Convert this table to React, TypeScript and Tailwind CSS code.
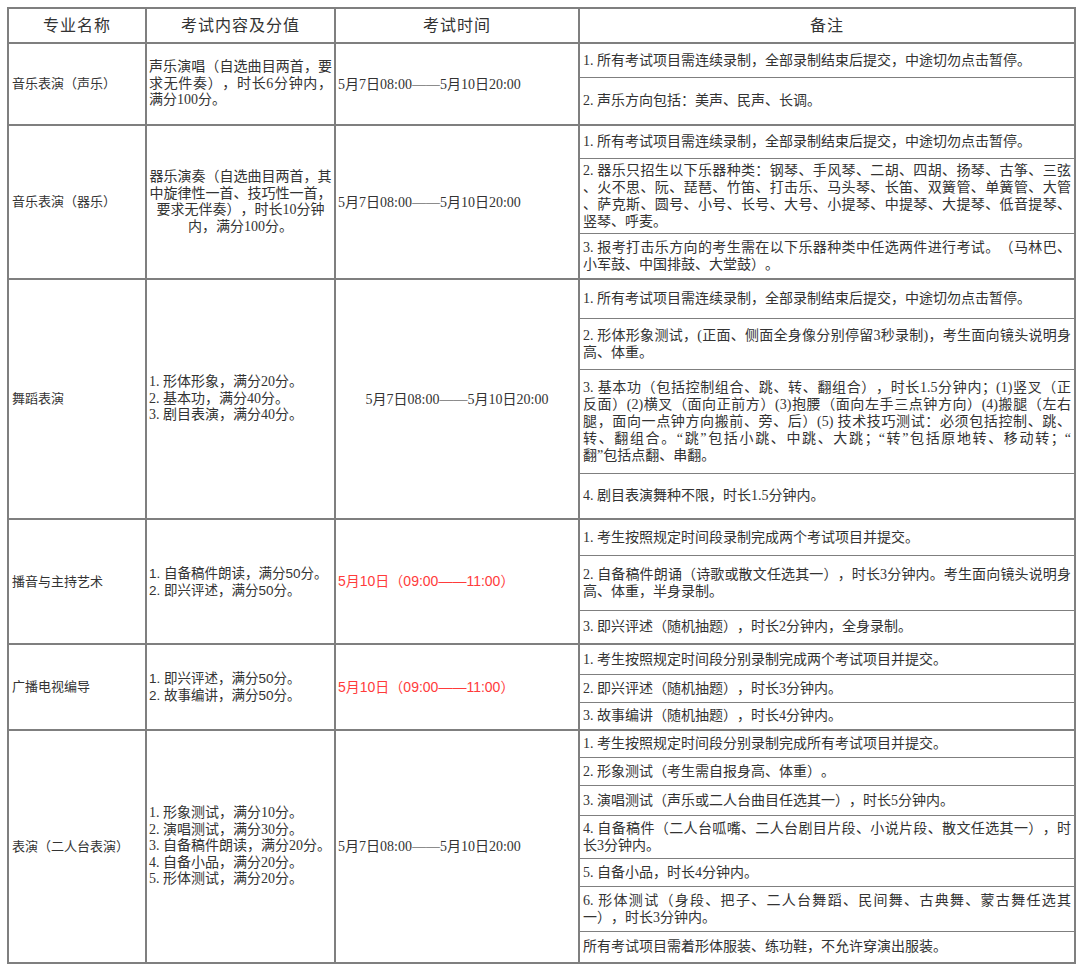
import React from "react";

type Note = { lines: string[]; h: string };

type Group = {
  name: string;
  content: string[];
  contentCenter?: boolean;
  contentJustify?: boolean;
  time: string;
  timeRed?: boolean;
  timeCenter?: boolean;
  sans?: boolean;
  notes: Note[];
};

const NOTE_ALL = "1. 所有考试项目需连续录制，全部录制结束后提交，中途切勿点击暂停。";

const GROUPS: Group[] = [
  {
    name: "音乐表演（声乐）",
    content: ["声乐演唱（自选曲目两首，要", "求无件奏），时长6分钟内，", "满分100分。"],
    contentJustify: true,
    time: "5月7日08:00——5月10日20:00",
    notes: [
      { lines: [NOTE_ALL], h: "h-[34px]" },
      { lines: ["2. 声乐方向包括：美声、民声、长调。"], h: "h-[48px]" },
    ],
  },
  {
    name: "音乐表演（器乐）",
    content: ["器乐演奏（自选曲目两首，其", "中旋律性一首、技巧性一首，", "要求无伴奏），时长10分钟", "内，满分100分。"],
    contentCenter: true,
    time: "5月7日08:00——5月10日20:00",
    notes: [
      { lines: [NOTE_ALL], h: "h-[33px]" },
      {
        lines: [
          "2. 器乐只招生以下乐器种类：钢琴、手风琴、二胡、四胡、扬琴、古筝、三弦",
          "、火不思、阮、琵琶、竹笛、打击乐、马头琴、长笛、双簧管、单簧管、大管",
          "、萨克斯、圆号、小号、长号、大号、小提琴、中提琴、大提琴、低音提琴、",
          "竖琴、呼麦。",
        ],
        h: "h-[75px]",
      },
      {
        lines: ["3. 报考打击乐方向的考生需在以下乐器种类中任选两件进行考试。（马林巴、", "小军鼓、中国排鼓、大堂鼓）。"],
        h: "h-[46px]",
      },
    ],
  },
  {
    name: "舞蹈表演",
    content: ["1. 形体形象，满分20分。", "2. 基本功，满分40分。", "3. 剧目表演，满分40分。"],
    time: "5月7日08:00——5月10日20:00",
    timeCenter: true,
    notes: [
      { lines: [NOTE_ALL], h: "h-[39px]" },
      {
        lines: ["2. 形体形象测试，(正面、侧面全身像分别停留3秒录制)，考生面向镜头说明身", "高、体重。"],
        h: "h-[51px]",
      },
      {
        lines: [
          "3. 基本功（包括控制组合、跳、转、翻组合），时长1.5分钟内；(1)竖叉（正",
          "反面）(2)横叉（面向正前方）(3)抱腰（面向左手三点钟方向）(4)搬腿（左右",
          "腿，面向一点钟方向搬前、旁、后）(5) 技术技巧测试：必须包括控制、跳、",
          "转、翻组合。“跳”包括小跳、中跳、大跳；“转”包括原地转、移动转；“",
          "翻”包括点翻、串翻。",
        ],
        h: "h-[104px]",
      },
      { lines: ["4. 剧目表演舞种不限，时长1.5分钟内。"], h: "h-[46px]" },
    ],
  },
  {
    name: "播音与主持艺术",
    content: ["1. 自备稿件朗读，满分50分。", "2. 即兴评述，满分50分。"],
    time: "5月10日（09:00——11:00）",
    timeRed: true,
    sans: true,
    notes: [
      { lines: ["1. 考生按照规定时间段录制完成两个考试项目并提交。"], h: "h-[36px]" },
      {
        lines: ["2. 自备稿件朗诵（诗歌或散文任选其一），时长3分钟内。考生面向镜头说明身", "高、体重，半身录制。"],
        h: "h-[55px]",
      },
      { lines: ["3. 即兴评述（随机抽题），时长2分钟内，全身录制。"], h: "h-[34px]" },
    ],
  },
  {
    name: "广播电视编导",
    content: ["1. 即兴评述，满分50分。", "2. 故事编讲，满分50分。"],
    time: "5月10日（09:00——11:00）",
    timeRed: true,
    sans: true,
    notes: [
      { lines: ["1. 考生按照规定时间段分别录制完成两个考试项目并提交。"], h: "h-[30px]" },
      { lines: ["2. 即兴评述（随机抽题），时长3分钟内。"], h: "h-[28px]" },
      { lines: ["3. 故事编讲（随机抽题），时长4分钟内。"], h: "h-[28px]" },
    ],
  },
  {
    name: "表演（二人台表演）",
    content: [
      "1. 形象测试，满分10分。",
      "2. 演唱测试，满分30分。",
      "3. 自备稿件朗读，满分20分。",
      "4. 自备小品，满分20分。",
      "5. 形体测试，满分20分。",
    ],
    time: "5月7日08:00——5月10日20:00",
    notes: [
      { lines: ["1. 考生按照规定时间段分别录制完成所有考试项目并提交。"], h: "h-[27px]" },
      { lines: ["2. 形象测试（考生需自报身高、体重）。"], h: "h-[28px]" },
      { lines: ["3. 演唱测试（声乐或二人台曲目任选其一），时长5分钟内。"], h: "h-[30px]" },
      {
        lines: ["4. 自备稿件（二人台呱嘴、二人台剧目片段、小说片段、散文任选其一），时", "长3分钟内。"],
        h: "h-[43px]",
      },
      { lines: ["5. 自备小品，时长4分钟内。"], h: "h-[28px]" },
      {
        lines: ["6. 形体测试（身段、把子、二人台舞蹈、民间舞、古典舞、蒙古舞任选其", "一），时长3分钟内。"],
        h: "h-[45px]",
      },
      { lines: ["所有考试项目需着形体服装、练功鞋，不允许穿演出服装。"], h: "h-[32px]" },
    ],
  },
];

function Lines({ lines, justify }: { lines: string[]; justify?: boolean }) {
  return (
    <>
      {lines.map((l, i) => (
        <div
          key={i}
          className={
            justify && i < lines.length - 1
              ? "text-justify [text-align-last:justify]"
              : "whitespace-nowrap"
          }
        >
          {l}
        </div>
      ))}
    </>
  );
}

const SANS = "font-['Liberation_Sans','Noto_Sans_CJK_SC',sans-serif]";
const MAIN = "border-2 border-[#7f7f7f] align-middle";

export default function App() {
  return (
    <div className="min-h-[970px] w-[1080px] bg-white pt-[7px] pl-[7px]">
      <table className="w-[1067px] table-fixed border-collapse font-['Liberation_Serif','Noto_Sans_CJK_SC',serif] text-[14px] text-[#333] [text-spacing-trim:space-all]">
        <colgroup>
          <col className="w-[138px]" />
          <col className="w-[189px]" />
          <col className="w-[244px]" />
          <col className="w-[496px]" />
        </colgroup>
        <thead>
          <tr className="h-[35px]">
            {["专业名称", "考试内容及分值", "考试时间", "备注"].map((t) => (
              <th key={t} className={`${MAIN} text-center text-[16px] font-normal tracking-[1px] text-[#333]`}>
                {t}
              </th>
            ))}
          </tr>
        </thead>
        <tbody>
          {GROUPS.map((g) =>
            g.notes.map((n, i) => {
              const last = i === g.notes.length - 1;
              return (
                <tr key={g.name + i} className={n.h}>
                  {i === 0 && (
                    <>
                      <td
                        rowSpan={g.notes.length}
                        className={`${MAIN} px-[3px] text-left text-[13px] ${g.sans ? SANS : ""}`}
                      >
                        {g.name}
                      </td>
                      <td
                        rowSpan={g.notes.length}
                        className={`${MAIN} px-[2px] ${g.contentCenter ? "text-center" : "text-left"} ${
                          g.sans ? SANS + " text-[13.5px] leading-[17px]" : "leading-[16.5px]"
                        }`}
                      >
                        <Lines lines={g.content} justify={g.contentJustify} />
                      </td>
                      <td
                        rowSpan={g.notes.length}
                        className={`${MAIN} px-[2px] whitespace-nowrap ${g.timeCenter ? "text-center" : "text-left"} ${
                          g.timeRed ? "text-[#ff3b3b] " + SANS : ""
                        }`}
                      >
                        {g.time}
                      </td>
                    </>
                  )}
                  <td
                    className={`border-x-2 border-[#7f7f7f] px-[3px] align-middle leading-[17px] ${
                      i === 0 ? "border-t-2" : "border-t"
                    } ${last ? "border-b-2" : "border-b"}`}
                  >
                    <Lines lines={n.lines} justify />
                  </td>
                </tr>
              );
            })
          )}
        </tbody>
      </table>
    </div>
  );
}
